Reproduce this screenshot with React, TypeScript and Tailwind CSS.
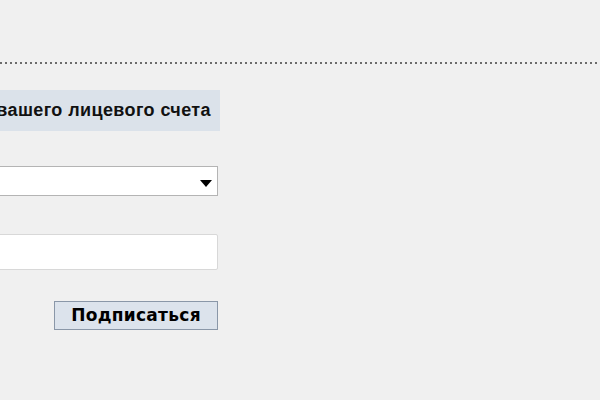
import React from 'react';

const App: React.FC = () => {
  return (
    <div className="w-[600px] h-[400px] overflow-hidden bg-[#f0f0f0] font-['Liberation_Sans',Arial,sans-serif]">
      {/* dotted separator */}
      <div className="mt-[62px] h-[2px] w-full bg-[repeating-linear-gradient(to_right,#6b6b6b_0px,#6b6b6b_2px,transparent_2px,transparent_5px)]" />

      <div className="-ml-[240px] w-[460px] flex flex-col">
        <div className="mt-[26px] h-[41px] bg-[#dbe2ea] flex items-center justify-end pr-[9px]">
          <span className="text-[18px] font-bold text-[#111] whitespace-nowrap tracking-[0.4px]">
            Введите номер вашего лицевого счета
          </span>
        </div>

        <div className="mt-[35px] mr-[2px] h-[30px] bg-white border border-[#b4b4b4] flex items-center justify-end pr-[5px]">
          <svg width="12" height="7" viewBox="0 0 12 7" className="mt-[4px]">
            <path d="M0 0 L12 0 L6 7 Z" fill="#000" />
          </svg>
        </div>

        <div className="mt-[38px] mr-[2px] h-[36px] bg-white border border-[#d8d8d8] rounded-[2px]" />

        <button className="mt-[31px] mr-[2px] self-end w-[164px] h-[29px] bg-[#dce3ec] border border-[#8a97a8] text-[17px] font-bold text-black tracking-[0.3px] font-['DejaVu_Sans',Verdana,sans-serif] flex items-center justify-center">
          Подписаться
        </button>
      </div>
    </div>
  );
};

export default App;
